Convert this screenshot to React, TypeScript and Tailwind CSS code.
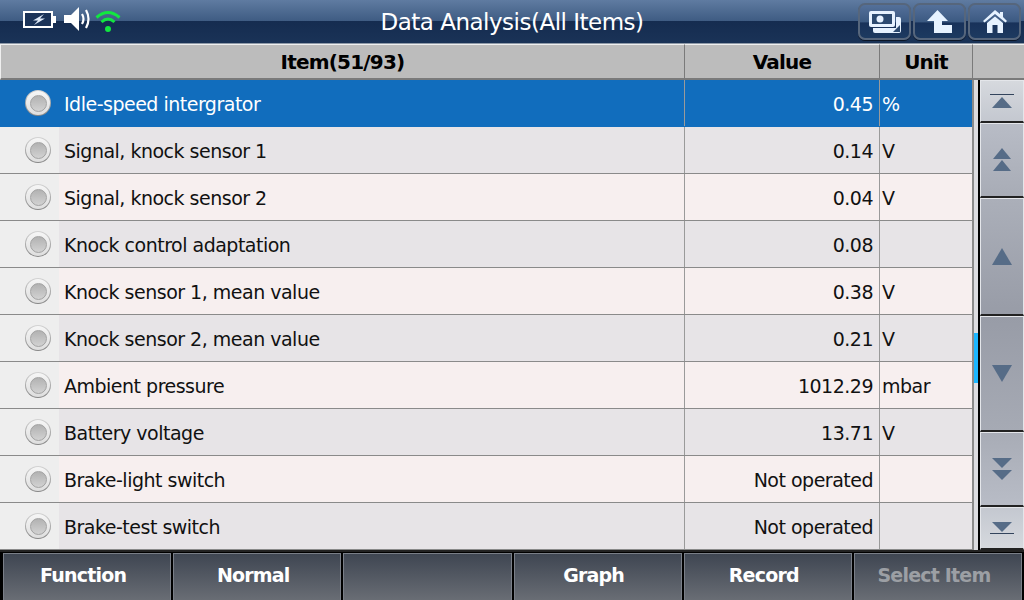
const ROWS = [
  { name: "Idle-speed intergrator", value: "0.45", unit: "%" },
  { name: "Signal, knock sensor 1", value: "0.14", unit: "V" },
  { name: "Signal, knock sensor 2", value: "0.04", unit: "V" },
  { name: "Knock control adaptation", value: "0.08", unit: "" },
  { name: "Knock sensor 1, mean value", value: "0.38", unit: "V" },
  { name: "Knock sensor 2, mean value", value: "0.21", unit: "V" },
  { name: "Ambient pressure", value: "1012.29", unit: "mbar" },
  { name: "Battery voltage", value: "13.71", unit: "V" },
  { name: "Brake-light switch", value: "Not operated", unit: "" },
  { name: "Brake-test switch", value: "Not operated", unit: "" },
];

const FONT = "font-['DejaVu_Sans',sans-serif]";
const ARROW = "#566c87";
const BAR = "#33445c";

function ScrollIcon({ kind }: { kind: string }) {
  if (kind === "top")
    return (
      <svg width="24" height="14" viewBox="0 0 24 14">
        <rect x="0" y="0" width="24" height="1" fill={BAR} />
        <path d="M12 3 L22 14 L2 14 Z" fill={ARROW} />
      </svg>
    );
  if (kind === "bottom")
    return (
      <svg width="24" height="12" viewBox="0 0 24 12">
        <rect x="0" y="11" width="24" height="1" fill={BAR} />
        <path d="M2 0 L22 0 L12 10 Z" fill={ARROW} />
      </svg>
    );
  if (kind === "pageup")
    return (
      <svg width="20" height="24" viewBox="0 0 20 24">
        <path d="M10 0 L19 11 L1 11 Z" fill={ARROW} />
        <path d="M10 12 L19 23 L1 23 Z" fill={ARROW} />
      </svg>
    );
  if (kind === "pagedown")
    return (
      <svg width="20" height="24" viewBox="0 0 20 24">
        <path d="M0 1 L20 1 L10 11 Z" fill={ARROW} />
        <path d="M0 13 L20 13 L10 23 Z" fill={ARROW} />
      </svg>
    );
  return (
    <svg width="20" height="17" viewBox="0 0 20 17">
      <path d={kind === "up" ? "M10 0 L20 17 L0 17 Z" : "M0 0 L20 0 L10 17 Z"} fill={ARROW} />
    </svg>
  );
}

function HeaderButton({ children }: { children: React.ReactNode }) {
  return (
    <button className="grid h-[37px] w-[53px] place-items-center rounded-[7px] border-2 border-[#56667c] bg-[linear-gradient(#54709a_0%,#3c5a82_50%,#18325a_55%,#1d3a60_100%)] shadow-[0_1px_0_#0b1526]">
      {children}
    </button>
  );
}

function Radio() {
  return (
    <span className="grid h-[26px] w-[26px] shrink-0 place-items-center rounded-full bg-gradient-to-b from-[#d4d4d4] to-[#858585]">
      <span className="grid h-[24px] w-[24px] place-items-center rounded-full bg-gradient-to-b from-[#f6f6f6] to-[#dedede]">
        <span className="h-[17px] w-[17px] rounded-full border border-[#a2a2a2] bg-gradient-to-b from-[#b2b2b2] to-[#d2d2d2]" />
      </span>
    </span>
  );
}

const SCROLL = [
  { kind: "top", h: "h-[43px]", bg: "from-[#d6d9de] to-[#c4c8d0]" },
  { kind: "pageup", h: "h-[75px]", bg: "from-[#b8bcc6] to-[#a8acb6]" },
  { kind: "up", h: "h-[118px]", bg: "from-[#abafb9] to-[#989ca7]" },
  { kind: "down", h: "h-[116px]", bg: "from-[#989ca7] to-[#a6aab4]" },
  { kind: "pagedown", h: "h-[75px]", bg: "from-[#a8acb6] to-[#b8bcc6]" },
  { kind: "bottom", h: "h-[43px]", bg: "from-[#c4c8d0] to-[#d6d9de]" },
];

const BUTTONS = ["Function", "Normal", "", "Graph", "Record", "Select Item"];

export default function App() {
  return (
    <div className={`flex h-[600px] w-[1024px] flex-col overflow-hidden bg-black ${FONT}`}>
      {/* title bar */}
      <div className="relative flex h-[44px] shrink-0 items-start justify-between border-b border-[#8f9aa8] bg-[linear-gradient(#5f7ba1_0%,#3e5b82_50%,#152c50_50%,#1a3357_100%)] pl-[23px] pr-[3px] pt-[3px]">
        <div className="flex items-start">
          <svg width="34" height="17" viewBox="0 0 34 17" className="mt-[8px]">
            <rect x="0" y="0" width="30" height="17" fill="#fff" />
            <rect x="2" y="2" width="26" height="13" fill="#1b3358" />
            <rect x="30" y="5" width="3" height="7" fill="#fff" />
            <path d="M21 3 L10 9.5 H15 L11 14 L22 7.5 H17 Z" fill="#dfe9f6" />
          </svg>
          <svg width="27" height="24" viewBox="0 0 27 24" className="ml-[7px] mt-[4px]">
            <path d="M0 8 H7 L15 0 V24 L7 16 H0 Z" fill="#fff" />
            <path d="M18 7 Q21 12 18 17" stroke="#fff" strokeWidth="2.2" fill="none" />
            <path d="M22 3 Q27 12 22 21" stroke="#fff" strokeWidth="2.2" fill="none" />
          </svg>
          <svg width="26" height="22" viewBox="0 0 26 22" className="ml-[4px] mt-[7px]">
            <path d="M1.5 7.5 Q13 -2.5 24.5 7.5" stroke="#12e640" strokeWidth="3" fill="none" />
            <path d="M6.5 12 Q13 6 19.5 12" stroke="#12e640" strokeWidth="3" fill="none" />
            <circle cx="13" cy="19" r="3" fill="#12e640" />
          </svg>
        </div>
        <span className="absolute left-0 right-0 top-[7px] text-center text-[23px] leading-[30px] tracking-[-0.5px] text-white">Data Analysis(All Items)</span>
        <div className="relative flex gap-[2px]">
          <HeaderButton>
            <svg width="32" height="22" viewBox="0 0 32 22">
              <path d="M4 17 V20 Q4 22 6 22 H30 Q32 22 32 20 V8 Q32 6 30 6 H27 V17 Z" fill="#e6f2ff" />
              <rect x="0" y="0" width="26" height="16" rx="2" fill="#e6f2ff" />
              <rect x="3" y="3" width="20" height="10" fill="#2c4a70" />
              <circle cx="11" cy="8" r="3.5" fill="#e6f2ff" />
              <path d="M24 21 L31 14 V21 Z" fill="#2c4a70" />
            </svg>
          </HeaderButton>
          <HeaderButton>
            <svg width="25" height="23" viewBox="0 0 25 23">
              <path d="M0 11 L10.5 0 L21 11 H15 V15 H25 V23 H7 V11 Z" fill="#e6f2ff" />
            </svg>
          </HeaderButton>
          <HeaderButton>
            <svg width="24" height="23" viewBox="0 0 24 23">
              <path d="M12 0 L17 4 V2 H20 V7 L24 11 L22.5 12.5 L12 4 L1.5 12.5 L0 11 Z" fill="#e6f2ff" />
              <path d="M4 13 L12 6.5 L20 13 V23 H14.5 V15 H9.5 V23 H4 Z" fill="#e6f2ff" />
            </svg>
          </HeaderButton>
        </div>
      </div>

      {/* column headings */}
      <div className="flex h-[36px] shrink-0 bg-[#bcbcbc] text-[20px] font-bold tracking-[-0.8px] text-black">
        <div className="flex w-[685px] items-center justify-center border border-b-2 border-[#efefef] border-b-[#7a7a7a] border-r-[#7a7a7a] pt-[1px]">Item(51/93)</div>
        <div className="flex w-[195px] items-center justify-center border-y border-b-2 border-r border-[#efefef] border-b-[#7a7a7a] border-r-[#7a7a7a] pt-[1px]">Value</div>
        <div className="flex w-[93px] items-center justify-center border-y border-b-2 border-r border-[#efefef] border-b-[#7a7a7a] border-r-[#7a7a7a] pt-[1px]">Unit</div>
        <div className="flex-1 border-y border-b-2 border-[#efefef] border-b-[#7a7a7a]" />
      </div>

      {/* table and scroll buttons */}
      <div className="flex h-[470px] shrink-0">
        <div className="w-[972px] shrink-0">
          {ROWS.map((r, i) => {
            const selected = i === 0;
            const bg = selected ? "bg-[#116dbd] text-white" : i % 2 ? "bg-[#e7e4e7] text-[#111]" : "bg-[#f7efef] text-[#111]";
            return (
              <div key={r.name} className={`flex h-[47px] border-b text-[19px] tracking-[-0.5px] ${bg} ${selected ? "border-[#116dbd]" : "border-[#8a8a8a]"}`}>
                <div className="flex w-[684px] items-center">
                  <div className={`flex h-full w-[59px] items-center pl-[25px] ${selected ? "" : "bg-[#eeeeee]"}`}>
                    <Radio />
                  </div>
                  <span className="mt-[2px] pl-[5px]">{r.name}</span>
                </div>
                <div className="flex w-[196px] items-center justify-end border-x border-[#9a9a9a] pr-[6px] pt-[2px]">{r.value}</div>
                <div className="flex flex-1 items-center pl-[2px] pt-[2px]">{r.unit}</div>
              </div>
            );
          })}
        </div>
        <div className="relative flex flex-1 border-l-2 border-[#8a8a8a] bg-[#dcdce0]">
          <span className="absolute left-0 top-[253px] h-[50px] w-[4px] bg-[#1cb6ff]" />
          <div className="ml-[4px] flex flex-1 flex-col border-l-2 border-black">
            {SCROLL.map((s) => (
              <button key={s.kind} className={`grid ${s.h} place-items-center border border-b-2 border-[#e4e6ea] border-b-[#222] bg-gradient-to-b ${s.bg}`}>
                <ScrollIcon kind={s.kind} />
              </button>
            ))}
          </div>
        </div>
      </div>

      {/* function keys */}
      <div className="flex h-[50px] shrink-0 gap-[2px] border-t-2 border-[#222] bg-black pl-[3px] pr-[2px] pt-[1px]">
        {BUTTONS.map((b, i) => (
          <button key={i} className={`h-[49px] flex-1 border border-b-0 border-[#7a7f88] bg-gradient-to-b from-[#3f4652] to-[#6b6f76] pb-[6px] pr-[8px] text-[19px] font-bold tracking-[-0.8px] ${b === "Select Item" ? "text-[#9c9fa4]" : "text-white"}`}>
            {b}
          </button>
        ))}
      </div>
    </div>
  );
}
